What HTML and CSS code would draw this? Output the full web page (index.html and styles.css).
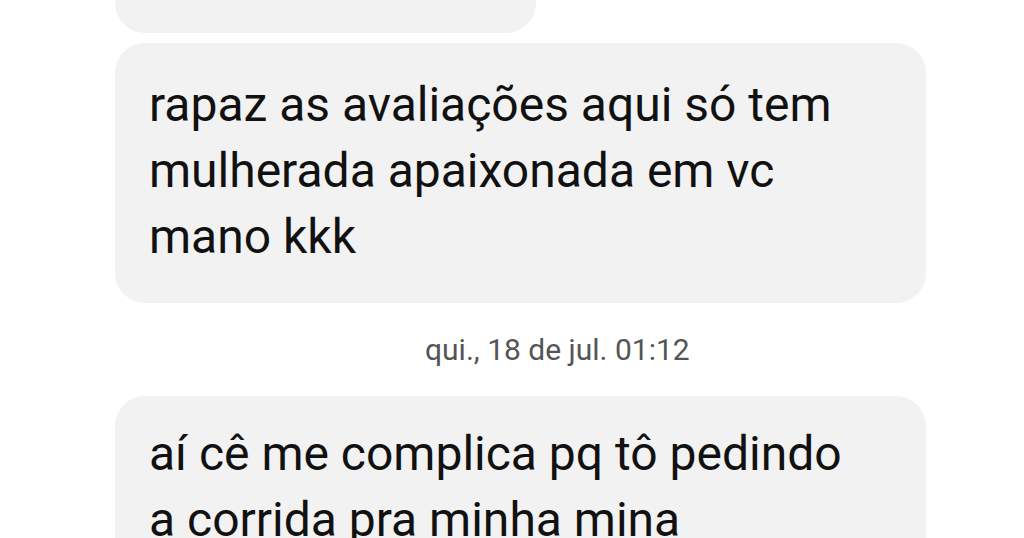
FILE: index.html
```html
<!DOCTYPE html>
<html lang="pt-BR">
<head>
    <meta charset="UTF-8">
    <meta name="viewport" content="width=device-width, initial-scale=1.0">
    <title>Mensagens</title>
    <link rel="stylesheet" href="styles.css">
</head>
<body>
    <div class="thread">
        <div class="bubble bubble-cut"></div>
        <div class="bubble bubble-wide">
            <p>rapaz as avaliações aqui só tem<br>mulherada apaixonada em vc<br>mano kkk</p>
        </div>
        <div class="timestamp">qui., 18 de jul. 01:12</div>
        <div class="bubble bubble-wide bubble-last">
            <p>aí cê me complica pq tô pedindo<br>a corrida pra minha mina</p>
        </div>
    </div>
</body>
</html>
```

FILE: styles.css
```css
:root {
    --bubble-color: #f2f2f2;
    --text-color: #111;
    --muted-text: #555;
}
body {
    margin: 0;
    background-color: #fff;
    font-family: Roboto, 'Noto Sans', sans-serif;
    color: var(--text-color);
    overflow: hidden;
    height: 538px;
}
.thread {
    display: flex;
    flex-direction: column;
    align-items: flex-start;
    padding-left: 115px;
}
.bubble {
    background-color: var(--bubble-color);
    border-radius: 30px;
}
.bubble p {
    margin: 0;
    font-size: 48px;
    line-height: 66px;
}
.bubble-cut {
    width: 421px;
    height: 80px;
    margin-top: -47px;
}
.bubble-wide {
    width: 811px;
    box-sizing: border-box;
    padding: 29px 32px 33px 34px;
    margin-top: 10px;
}
.bubble-last {
    margin-top: 0;
    padding-top: 25px;
}
.timestamp {
    align-self: stretch;
    height: 93px;
    display: flex;
    align-items: center;
    padding-left: 310px;
    font-size: 30px;
    color: var(--muted-text);
}
```
